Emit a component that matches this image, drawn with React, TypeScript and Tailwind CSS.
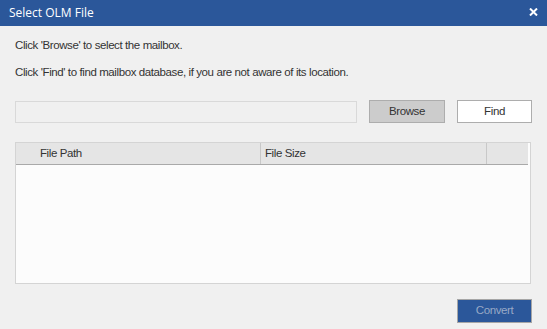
import React from "react";

const App = () => {
  return (
    <div
      className="w-[547px] h-[329px] bg-[#f0f0f0] flex flex-col overflow-hidden text-[#333333]"
      style={{ fontFamily: '"Liberation Sans", Arial, sans-serif' }}
    >
      <div className="h-[26px] bg-[#2b579a] flex items-center justify-between pl-[9px] pr-[9px] text-white">
        <span className="text-[12px]" style={{ fontFamily: '"Open Sans", sans-serif' }}>Select OLM File</span>
        <svg width="9" height="8" viewBox="0 0 9 8" className="mt-[-2px]">
          <path d="M1 0.5 L8 7.5 M8 0.5 L1 7.5" stroke="#ffffff" strokeWidth="2" />
        </svg>
      </div>

      <div className="flex flex-col px-[15px] text-[11.5px] tracking-[-0.4px]">
        <p className="leading-[14px] mt-[12px]">Click 'Browse' to select the mailbox.</p>
        <p className="leading-[14px] mt-[13px]">
          Click 'Find' to find mailbox database, if you are not aware of its location.
        </p>

        <div className="flex items-center mt-[21px] h-[23px]">
          <div className="w-[342px] h-[22px] border border-[#d9d9d9] bg-[#f0f0f0]" />
          <button className="ml-[12px] w-[76px] h-[23px] bg-[#cccccc] border border-[#adadad]">
            Browse
          </button>
          <button className="ml-[12px] w-[75px] h-[23px] bg-white border border-[#adadad]">
            Find
          </button>
        </div>

        <div className="mt-[19px] w-[516px] h-[142px] border border-[#d4d4d4] bg-[#fcfcfc] flex flex-col">
          <div className="flex h-[22px] bg-[#e5e5e5] border-b border-[#a9a9a9] mr-[2px]">
            <div className="w-[245px] border-r border-[#c8c8c8] pl-[24px] flex items-center">File Path</div>
            <div className="w-[226px] border-r border-[#c8c8c8] pl-[4px] flex items-center">File Size</div>
            <div className="flex-1" />
          </div>
        </div>

        <div className="flex justify-end mt-[15px]">
          <button className="w-[75px] h-[24px] bg-[#2b579a] border border-[#a6a6a6] text-[#98a9c6]">
            Convert
          </button>
        </div>
      </div>
    </div>
  );
};

export default App;
